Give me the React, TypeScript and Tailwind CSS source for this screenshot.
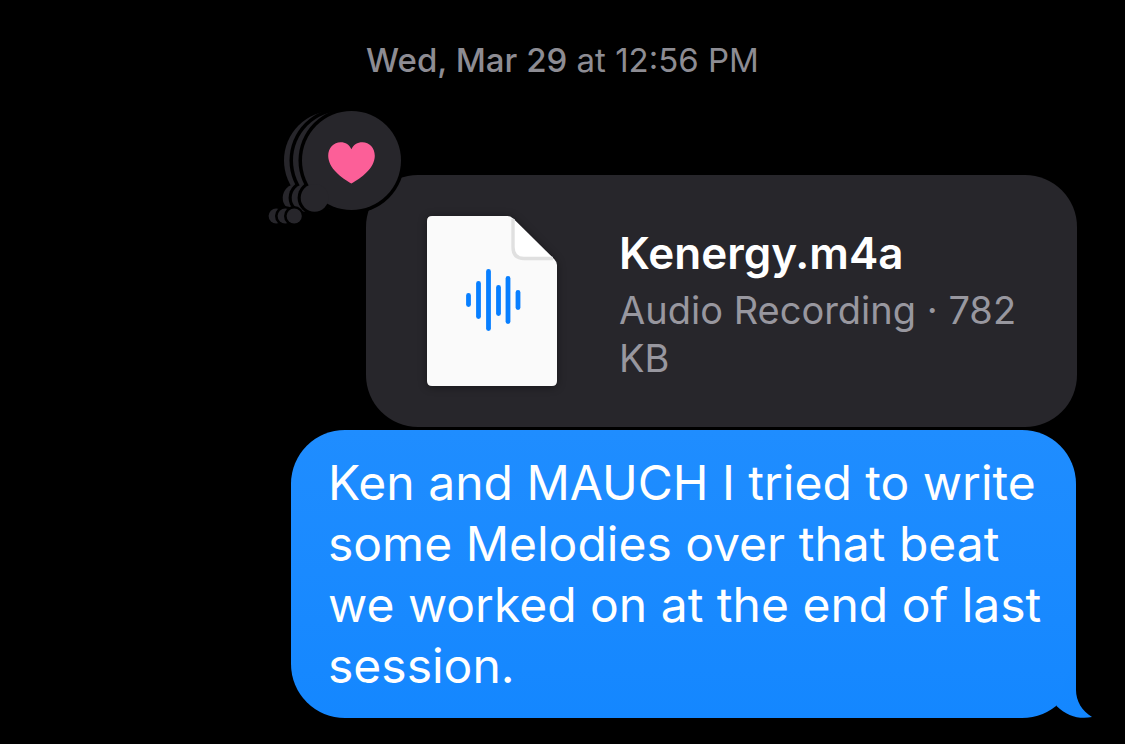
const WAVE_BARS = [
  { x: 41.5, top: 77, bottom: 91 },
  { x: 51.5, top: 65, bottom: 103 },
  { x: 61.5, top: 53, bottom: 115 },
  { x: 71.5, top: 69, bottom: 100 },
  { x: 81, top: 60, bottom: 108 },
  { x: 91, top: 74, bottom: 94 },
];

function ThoughtBubble({ dx }: { dx: number }) {
  return (
    <g transform={`translate(${dx} 0)`}>
      <g fill="#000">
        <circle cx="87.5" cy="54.5" r="53" />
        <circle cx="50.6" cy="91.8" r="17" />
        <circle cx="30" cy="110" r="10" />
      </g>
      <g fill="#27262b">
        <circle cx="87.5" cy="54.5" r="49.5" />
        <circle cx="50.6" cy="91.8" r="13.9" />
        <circle cx="30.2" cy="110" r="7.6" />
      </g>
    </g>
  );
}

function Reaction() {
  return (
    <svg
      role="img"
      aria-label="Loved"
      viewBox="0 0 142 122"
      className="absolute -left-[102px] -top-[69px] h-[122px] w-[142px]"
    >
      <ThoughtBubble dx={-18} />
      <ThoughtBubble dx={-9} />
      <ThoughtBubble dx={0} />
      <path
        fill="#fc5f98"
        d="M87.4 77.6C78 72 64.2 62.5 64.2 49.8C64.2 41.8 69.8 36.2 76.6 36.2C81.6 36.2 85.4 38.8 87.4 43.2C89.4 38.8 93.4 36.2 98.4 36.2C105.4 36.2 110.8 41.8 110.8 49.8C110.8 62.5 97 72 87.4 77.6Z"
      />
    </svg>
  );
}

function AudioFileIcon() {
  return (
    <svg
      aria-hidden="true"
      viewBox="0 0 130 170"
      className="h-[170px] w-[130px] shrink-0 drop-shadow-[0_1px_4px_rgba(0,0,0,0.4)]"
    >
      <path
        fill="#fafafa"
        d="M5 0H80.500Q83.500 0 85.800 2.200L127.500 43.500Q130 46 130 49V165Q130 170 125 170H5Q0 170 0 165V5Q0 0 5 0Z"
      />
      <path fill="#fff" d="M86 2.400V30Q86 42.500 97 42.500H126.500Z" />
      <path
        fill="none"
        stroke="#e0e0e0"
        strokeWidth="3.400"
        d="M86 3V31Q86 42.500 97 42.500H126"
      />
      <g stroke="#087fff" strokeWidth="4.800" strokeLinecap="round">
        {WAVE_BARS.map((bar) => (
          <line key={bar.x} x1={bar.x} x2={bar.x} y1={bar.top + 2.4} y2={bar.bottom - 2.4} />
        ))}
      </g>
    </svg>
  );
}

function Attachment() {
  return (
    <a
      href="#kenergy"
      className="relative flex w-full max-w-[711px] items-center rounded-[52px] bg-[#27262b] py-[41px] pl-[61px] pr-10"
    >
      <Reaction />
      <AudioFileIcon />
      <span className="ml-[62px] flex min-w-0 flex-col">
        <span className="text-[44px] font-semibold leading-[66px] text-white">Kenergy.m4a</span>
        <span className="text-[38px] leading-[48px] text-[#98979f]">Audio Recording · 782 KB</span>
      </span>
    </a>
  );
}

function Message() {
  return (
    <div className="relative mr-px w-full max-w-[785px] rounded-[54px] bg-linear-to-b from-[#1f8dff] to-[#1487ff] py-[22px] pl-[37px] pr-8">
      <p className="text-[48px] leading-[61px] text-white">
        Ken and MAUCH I tried to write some Melodies over that beat we worked on at the end of last
        session.
      </p>
      <svg
        aria-hidden="true"
        viewBox="0 0 50 60"
        className="absolute -right-4 bottom-0 h-[60px] w-[50px]"
      >
        <defs>
          <linearGradient id="tail" x1="0" y1="0" x2="0" y2="1">
            <stop offset="0" stopColor="#1688ff" />
            <stop offset="1" stopColor="#1487ff" />
          </linearGradient>
        </defs>
        <path
          fill="url(#tail)"
          d="M34 0V32C34 43 40 53 50 59C38 61.500 25 58.500 14.500 48L20 30Z"
        />
      </svg>
    </div>
  );
}

export default function App() {
  return (
    <main className="min-h-screen bg-black pb-6 pl-6 pr-12 pt-10 font-['Inter',sans-serif]">
      <p className="pl-6 text-center text-[33px] leading-10 text-[#8d8c93]">
        <time>
          <span className="font-medium">Wed, Mar 29</span> at 12:56 PM
        </time>
      </p>
      <div className="mt-[95px] flex flex-col items-end gap-[3px]">
        <Attachment />
        <Message />
      </div>
    </main>
  );
}
